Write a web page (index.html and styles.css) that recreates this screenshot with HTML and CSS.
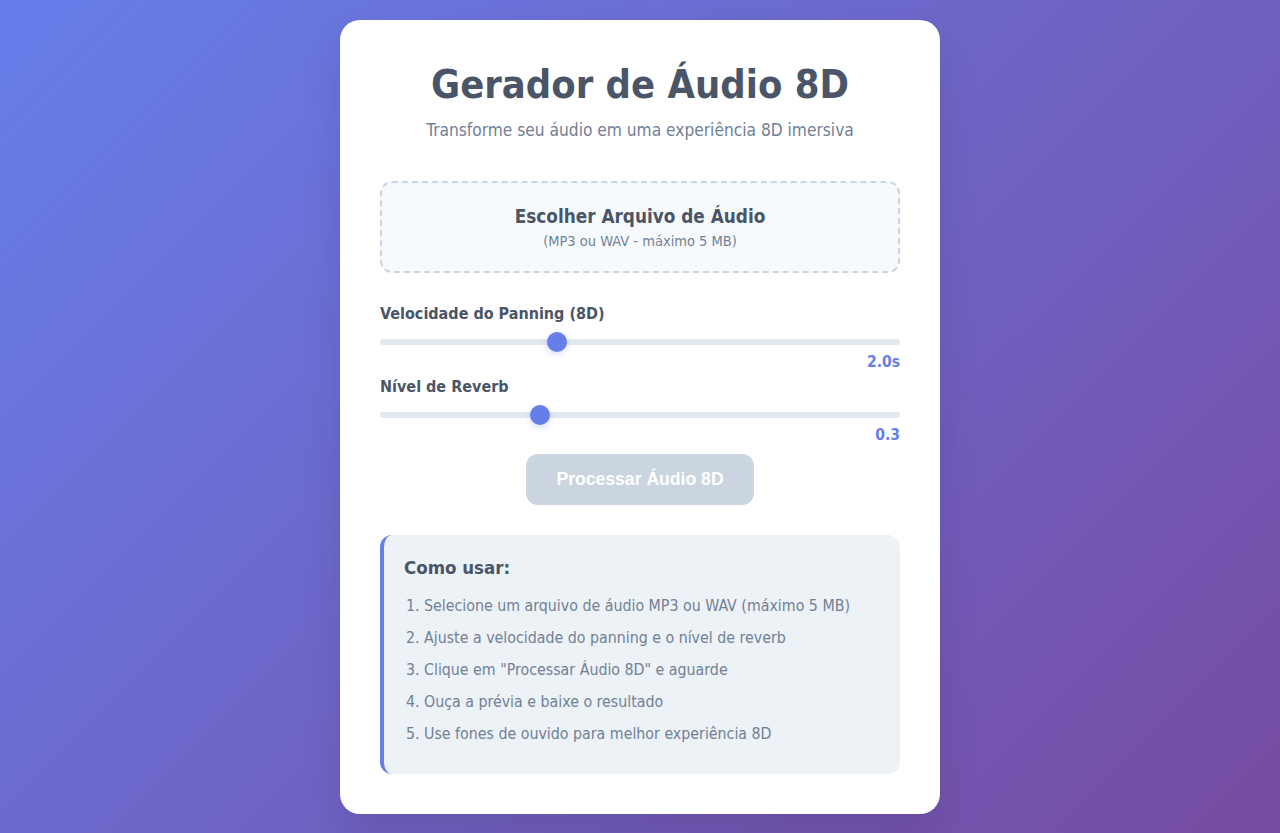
FILE: index.html
```html
<!DOCTYPE html>
<html lang="pt-BR">
<head>
<meta charset="utf-8">
<title>Gerador de Áudio 8D</title>
<link rel="stylesheet" href="styles.css">
</head>
<body>
<main class="card">
  <header class="header">
    <h1 class="title">Gerador de Áudio 8D</h1>
    <p class="subtitle">Transforme seu áudio em uma experiência 8D imersiva</p>
  </header>

  <label class="upload">
    <input type="file" accept=".mp3,.wav" class="file-input">
    <span class="upload-title">Escolher Arquivo de Áudio</span>
    <span class="upload-hint">(MP3 ou WAV - máximo 5 MB)</span>
  </label>

  <div class="control">
    <label class="control-label" for="speed">Velocidade do Panning (8D)</label>
    <input class="slider" id="speed" type="range" min="0.5" max="5" step="0.1" value="2">
    <div class="control-value">2.0s</div>
  </div>

  <div class="control">
    <label class="control-label" for="reverb">Nível de Reverb</label>
    <input class="slider" id="reverb" type="range" min="0" max="1" step="0.1" value="0.3">
    <div class="control-value">0.3</div>
  </div>

  <div class="actions">
    <button class="process-btn" disabled>Processar Áudio 8D</button>
  </div>

  <section class="instructions">
    <h3 class="instructions-title">Como usar:</h3>
    <ol class="steps">
      <li>Selecione um arquivo de áudio MP3 ou WAV (máximo 5 MB)</li>
      <li>Ajuste a velocidade do panning e o nível de reverb</li>
      <li>Clique em "Processar Áudio 8D" e aguarde</li>
      <li>Ouça a prévia e baixe o resultado</li>
      <li>Use fones de ouvido para melhor experiência 8D</li>
    </ol>
  </section>
</main>
</body>
</html>
```

FILE: styles.css
```css
* { box-sizing: border-box; }

html, body { height: 100%; }

body {
  margin: 0;
  padding: 20px;
  font-family: "DejaVu Sans Condensed", "DejaVu Sans", sans-serif;
  background: linear-gradient(135deg, #667eea 0%, #764ba2 100%);
  display: flex;
  justify-content: center;
  align-items: flex-start;
}

.card {
  width: 600px;
  background: #ffffff;
  border-radius: 20px;
  padding: 40px;
  box-shadow: 0 20px 40px rgba(0, 0, 0, 0.1);
}

.header {
  text-align: center;
  margin-bottom: 41px;
}

.title {
  margin: 0 0 12px;
  font-size: 39.5px;
  line-height: 48px;
  font-weight: bold;
  color: #4a5568;
}

.subtitle {
  margin: 0;
  font-size: 17.2px;
  line-height: 20px;
  color: #718096;
}

.upload {
  display: flex;
  flex-direction: column;
  align-items: center;
  gap: 5px;
  border: 2px dashed #cbd5e0;
  border-radius: 12px;
  background: #f7fafc;
  padding: 23px 20px 21px;
  margin-bottom: 31px;
  cursor: pointer;
}

.file-input { display: none; }

.upload-title {
  font-size: 18.8px;
  line-height: 22px;
  font-weight: bold;
  color: #4a5568;
}

.upload-hint {
  font-size: 14.5px;
  line-height: 17px;
  color: #718096;
}

.control {
  display: flex;
  flex-direction: column;
  margin-bottom: 6px;
}

.control-label {
  font-size: 16px;
  font-weight: bold;
  color: #4a5568;
  margin-bottom: 8px;
}

.slider {
  -webkit-appearance: none;
  appearance: none;
  width: 100%;
  height: 6px;
  margin: 8px 0;
  border-radius: 3px;
  background: #e2e8f0;
  outline: none;
}

.slider::-webkit-slider-thumb {
  -webkit-appearance: none;
  appearance: none;
  width: 20px;
  height: 20px;
  border-radius: 50%;
  background: #667eea;
  box-shadow: 0 2px 6px rgba(102, 126, 234, 0.3);
  cursor: pointer;
}

.control-value {
  text-align: right;
  font-size: 15.5px;
  font-weight: bold;
  color: #667eea;
}

.actions {
  display: flex;
  justify-content: center;
  margin: 10px 0 30px;
}

.process-btn {
  font-family: "Liberation Sans", Arial, sans-serif;
  font-size: 17.6px;
  line-height: 19px;
  font-weight: bold;
  color: #ffffff;
  background: #cbd5e0;
  border: none;
  border-radius: 12px;
  padding: 16px 30px;
  cursor: not-allowed;
}

.instructions {
  background: #edf2f7;
  border-left: 4px solid #667eea;
  border-radius: 12px;
  padding: 22px 20px 24px;
}

.instructions-title {
  margin: 0 0 11px;
  font-size: 18.5px;
  line-height: 21.5px;
  font-weight: bold;
  color: #4a5568;
}

.steps {
  margin: 0;
  padding-left: 20px;
  color: #718096;
  font-size: 15.8px;
}

.steps li {
  line-height: 32px;
}
```
